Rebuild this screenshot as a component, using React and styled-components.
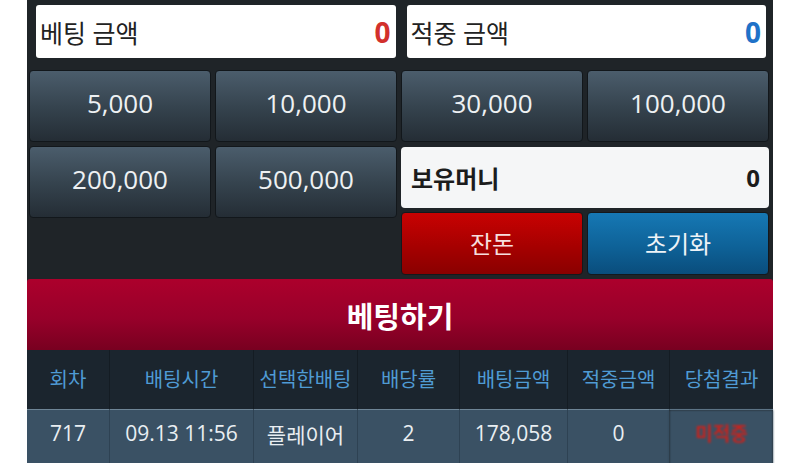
import React from "react";
import styled, { createGlobalStyle } from "styled-components";

const Global = createGlobalStyle`
  html, body { margin: 0; padding: 0; background: #ffffff; }
  body { font-family: "Open Sans", "Noto Sans CJK KR", sans-serif; }
  * { box-sizing: border-box; }
`;

const Page = styled.div`
  width: 800px;
  height: 463px;
  overflow: hidden;
  background: #ffffff;
  padding-left: 27px;
`;

const Panel = styled.div`
  width: 746px;
  background: #1f2428;
  padding-top: 5px;
  display: flex;
  flex-direction: column;
`;

const TopRow = styled.div`
  display: grid;
  grid-template-columns: 1fr 1fr;
  column-gap: 11px;
  padding: 0 7px 0 9px;
`;

const AmountBox = styled.div`
  height: 53px;
  background: #ffffff;
  border-radius: 3px;
  display: flex;
  align-items: center;
  justify-content: space-between;
  padding: 0 5px 0 4px;
  font-size: 25px;
  color: #222;
`;

const AmountValue = styled.span`
  font-weight: 700;
  font-size: 28px;
  color: ${(p) => p.$color};
`;

const ChipGrid = styled.div`
  margin-top: 12px;
  display: grid;
  grid-template-columns: repeat(4, 182px);
  grid-template-rows: 72px auto;
  gap: 4px;
  padding-left: 2px;
`;

const Chip = styled.button`
  font-family: inherit;
  height: 72px;
  align-self: start;
  border: 1px solid #12171b;
  border-radius: 4px;
  background: linear-gradient(to bottom, #4b5d6c 0%, #36444f 50%, #242d35 100%);
  color: #eef1f3;
  font-size: 26px;
  padding: 0 0 7px 0;
  cursor: pointer;
`;

const Side = styled.div`
  grid-column: 3 / span 2;
  display: flex;
  flex-direction: column;
  gap: 4px;
`;

const Holding = styled.div`
  height: 61px;
  margin-top: 1px;
  background: #f5f6f7;
  border-radius: 4px;
  display: flex;
  align-items: center;
  justify-content: space-between;
  padding: 0 9px 0 10px;
  font-size: 24px;
  font-weight: 700;
  color: #1c1c1c;
`;

const ActionRow = styled.div`
  display: grid;
  grid-template-columns: 182px 182px;
  gap: 4px;
`;

const Action = styled.button`
  font-family: inherit;
  height: 63px;
  border: 1px solid #14181c;
  border-radius: 4px;
  padding: 0 0 3px 0;
  font-size: 24px;
  cursor: pointer;
  color: ${(p) => (p.$variant === "red" ? "#f6dede" : "#eef3f7")};
  background: ${(p) =>
    p.$variant === "red"
      ? "linear-gradient(to bottom, #c80202 0%, #a60000 55%, #8a0000 100%)"
      : "linear-gradient(to bottom, #1678b4 0%, #0e6298 55%, #0a4d7c 100%)"};
`;

const BetButton = styled.button`
  margin-top: 4px;
  width: 100%;
  height: 71px;
  border: none;
  border-radius: 3px 3px 0 0;
  background: linear-gradient(to bottom, #ac002c 0%, #98002a 55%, #780020 100%);
  color: #ffffff;
  font-family: inherit;
  font-size: 29px;
  font-weight: 700;
  cursor: pointer;
  padding: 0;
`;

const Table = styled.div`
  display: grid;
  grid-template-columns: 82px 144px 104px 102px 108px 102px 104px;
`;

const HeadCell = styled.div`
  height: 60px;
  background: #1b252e;
  border-left: ${(p) => (p.$first ? "none" : "1px solid #141c23")};
  border-bottom: 1px solid #6e8596;
  display: flex;
  align-items: center;
  justify-content: center;
  color: #4f9bd4;
  font-size: 20px;
  padding-bottom: 2px;
`;

const Cell = styled.div`
  height: 60px;
  background: #3a5164;
  border-left: ${(p) => (p.$first ? "none" : "1px solid #2e4253")};
  display: flex;
  align-items: flex-start;
  padding-top: 9px;
  justify-content: center;
  color: ${(p) => p.$color || "#e9eef2"};
  font-size: ${(p) => p.$size || "21px"};
  font-weight: ${(p) => p.$weight || 400};
  filter: ${(p) => (p.$blur ? "blur(0.8px)" : "none")};
`;

const heads = ["회차", "배팅시간", "선택한배팅", "배당률", "배팅금액", "적중금액", "당첨결과"];

export default function App() {
  return (
    <Page>
      <Global />
      <Panel>
        <TopRow>
          <AmountBox>
            <span>베팅 금액</span>
            <AmountValue $color="#d2302c">0</AmountValue>
          </AmountBox>
          <AmountBox>
            <span>적중 금액</span>
            <AmountValue $color="#1f72c8">0</AmountValue>
          </AmountBox>
        </TopRow>
        <ChipGrid>
          <Chip>5,000</Chip>
          <Chip>10,000</Chip>
          <Chip>30,000</Chip>
          <Chip>100,000</Chip>
          <Chip>200,000</Chip>
          <Chip>500,000</Chip>
          <Side>
            <Holding>
              <span>보유머니</span>
              <span>0</span>
            </Holding>
            <ActionRow>
              <Action $variant="red">잔돈</Action>
              <Action $variant="blue">초기화</Action>
            </ActionRow>
          </Side>
        </ChipGrid>
        <BetButton>베팅하기</BetButton>
        <Table>
          {heads.map((h, i) => (
            <HeadCell key={h} $first={i === 0}>{h}</HeadCell>
          ))}
          <Cell $first>717</Cell>
          <Cell>09.13 11:56</Cell>
          <Cell>플레이어</Cell>
          <Cell>2</Cell>
          <Cell>178,058</Cell>
          <Cell>0</Cell>
          <Cell $color="#c4241f" $size="19px" $weight={700} $blur>미적중</Cell>
        </Table>
      </Panel>
    </Page>
  );
}
